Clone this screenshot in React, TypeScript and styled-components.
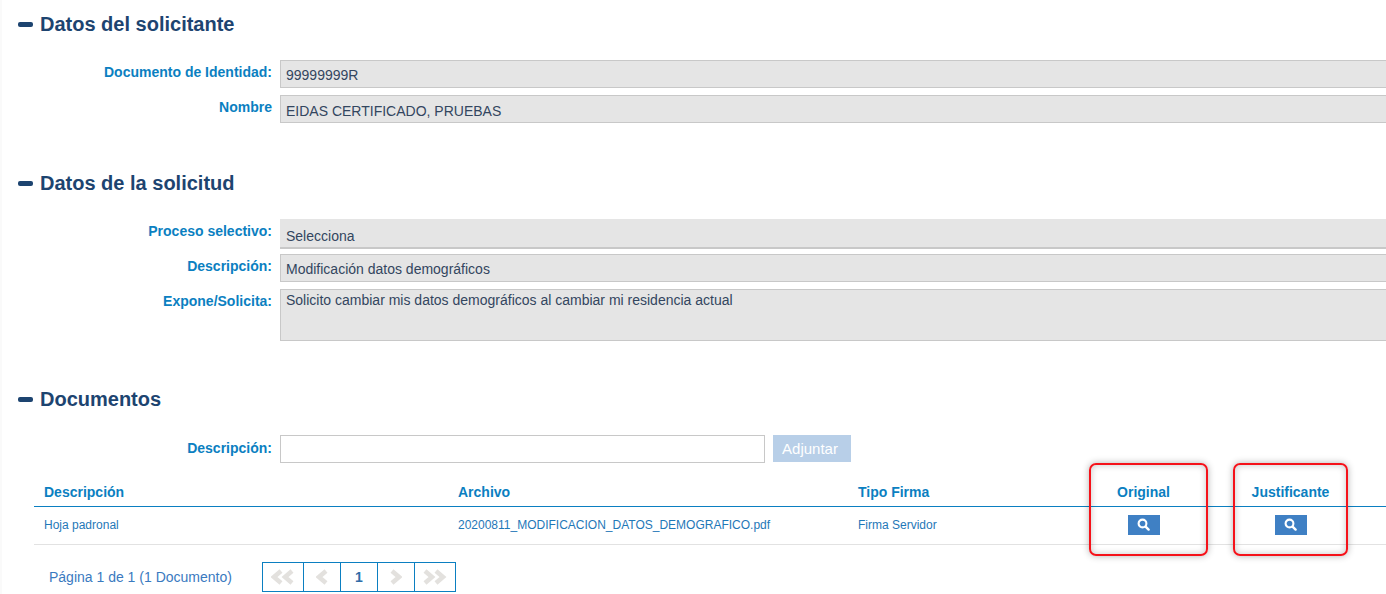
import React from "react";
import styled, { createGlobalStyle } from "styled-components";

const Global = createGlobalStyle`
  html, body { margin: 0; padding: 0; background: #fff; overflow: hidden; height: 594px; }
  body { font-family: "Liberation Sans", Arial, sans-serif; }
`;

const Page = styled.div`
  position: relative;
  width: 1400px;
  height: 594px;
  overflow: hidden;
  padding: 12px 0 0 16px;
  border-left: 2px solid #fafafa;
  box-sizing: border-box;
`;

const Section = styled.section<{ $gap: number }>`
  margin-bottom: ${(p) => p.$gap}px;
`;

const Heading = styled.h2`
  display: flex;
  align-items: center;
  gap: 7px;
  margin: 0 0 24px;
  height: 24px;
  font-size: 20px;
  line-height: 24px;
  font-weight: 700;
  color: #1d4470;
`;

const Minus = styled.span`
  width: 15px;
  height: 5px;
  border-radius: 2px;
  background: #1d4470;
`;

const Row = styled.div<{ $mb?: number }>`
  display: flex;
  gap: 8px;
  margin-bottom: ${(p) => p.$mb ?? 0}px;
`;

const Label = styled.label<{ $pt?: number }>`
  width: 254px;
  flex: none;
  text-align: right;
  font-size: 14px;
  font-weight: 700;
  line-height: 16px;
  padding-top: ${(p) => p.$pt ?? 4}px;
  color: #0b7fc1;
`;

const Field = styled.div<{ $h: number; $pt: number }>`
  flex: none;
  width: 1120px;
  height: ${(p) => p.$h}px;
  padding: ${(p) => p.$pt}px 5px 0;
  box-sizing: border-box;
  background: #e5e5e5;
  border: 1px solid #c8c8c8;
  font-size: 14px;
  line-height: 16px;
  color: #33465f;
`;

const SelectField = styled(Field)`
  border-width: 0 0 2px;
  padding-left: 6px;
`;

const TextInput = styled.div`
  width: 485px;
  height: 28px;
  box-sizing: border-box;
  background: #fff;
  border: 1px solid #c8c8c8;
`;

const Adjuntar = styled.button`
  width: 78px;
  height: 27px;
  padding: 0 4px 0 0;
  border: 0;
  background: #b8cfe8;
  color: #fff;
  font: 400 15px/27px "Liberation Sans", Arial, sans-serif;
`;

const Table = styled.div`
  margin: 9px 0 0 16px;
  width: 1352px;
`;

const Columns = styled.div`
  display: grid;
  grid-template-columns: 414px 400px 212px 147px 147px;
  padding-left: 10px;
  align-items: center;
`;

const HeadRow = styled(Columns)`
  border-bottom: 1px solid #0b7fc1;
  padding-top: 6px;
  height: 28px;
  font-size: 14px;
  font-weight: 700;
  color: #0b7fc1;
`;

const BodyRow = styled(Columns)`
  height: 35px;
  padding-bottom: 2px;
  border-bottom: 1px solid #e2e2e2;
  font-size: 12px;
  color: #1f78b8;
`;

const Center = styled.div`
  display: flex;
  justify-content: center;
`;

const ViewButton = styled.button`
  width: 32px;
  height: 20px;
  padding: 0;
  border: 0;
  display: flex;
  align-items: center;
  justify-content: center;
  background: #3f80c4;
`;

const Footer = styled.div`
  display: flex;
  align-items: center;
  margin: 17px 0 0 15px;
`;

const PageInfo = styled.div`
  width: 213px;
  font-size: 14px;
  color: #3a7abf;
`;

const Pager = styled.div`
  display: flex;
  height: 30px;
  box-sizing: border-box;
  border: 1px solid #0b7fc1;
`;

const PagerCell = styled.div<{ $w: number }>`
  width: ${(p) => p.$w}px;
  display: flex;
  align-items: center;
  justify-content: center;
  box-sizing: border-box;
  font-size: 14px;
  font-weight: 700;
  color: #2f6da8;
  & + & { border-left: 1px solid #0b7fc1; }
`;

const Callout = styled.div<{ $x: number; $w: number }>`
  position: absolute;
  left: ${(p) => p.$x}px;
  top: 463px;
  width: ${(p) => p.$w}px;
  height: 93px;
  box-sizing: border-box;
  border: 2px solid #f5121a;
  border-radius: 7px;
  box-shadow: 0 0 7px rgba(0, 0, 0, 0.3), inset 0 0 7px rgba(0, 0, 0, 0.22);
`;

const Search = () => (
  <svg width="13" height="13" viewBox="0 0 13 13" fill="none" stroke="#fff">
    <circle cx="5.5" cy="5.5" r="3.9" strokeWidth="2.1" />
    <path d="M8.6 8.6 L11.6 11.6" strokeWidth="2.4" strokeLinecap="round" />
  </svg>
);

const Chevrons = ({ dir, n }: { dir: "l" | "r"; n: number }) => (
  <svg width={n === 2 ? 24 : 12} height="16" viewBox={`0 0 ${n === 2 ? 24 : 12} 16`} fill="none" stroke="#e3e1de" strokeWidth="4.5">
    {Array.from({ length: n }).map((_, i) => {
      const o = i * 11;
      return (
        <path
          key={i}
          d={dir === "l" ? `M${o + 10} 2 L${o + 3} 8 L${o + 10} 14` : `M${o + 2} 2 L${o + 9} 8 L${o + 2} 14`}
        />
      );
    })}
  </svg>
);

export default function App() {
  return (
    <>
      <Global />
      <Page>
        <Section $gap={48}>
          <Heading><Minus />Datos del solicitante</Heading>
          <Row $mb={7}>
            <Label>Documento de Identidad:</Label>
            <Field $h={28} $pt={6}>99999999R</Field>
          </Row>
          <Row>
            <Label>Nombre</Label>
            <Field $h={28} $pt={7}>EIDAS CERTIFICADO, PRUEBAS</Field>
          </Row>
        </Section>
        <Section $gap={46}>
          <Heading><Minus />Datos de la solicitud</Heading>
          <Row $mb={5}>
            <Label>Proceso selectivo:</Label>
            <SelectField $h={30} $pt={9}>Selecciona</SelectField>
          </Row>
          <Row $mb={7}>
            <Label>Descripción:</Label>
            <Field $h={28} $pt={6}>Modificación datos demográficos</Field>
          </Row>
          <Row>
            <Label>Expone/Solicita:</Label>
            <Field $h={52} $pt={2}>Solicito cambiar mis datos demográficos al cambiar mi residencia actual</Field>
          </Row>
        </Section>
        <Section $gap={0}>
          <Heading><Minus />Documentos</Heading>
          <Row>
            <Label $pt={5}>Descripción:</Label>
            <TextInput />
            <Adjuntar>Adjuntar</Adjuntar>
          </Row>
          <Table>
            <HeadRow>
              <div>Descripción</div>
              <div>Archivo</div>
              <div>Tipo Firma</div>
              <Center>Original</Center>
              <Center>Justificante</Center>
            </HeadRow>
            <BodyRow>
              <div>Hoja padronal</div>
              <div>20200811_MODIFICACION_DATOS_DEMOGRAFICO.pdf</div>
              <div>Firma Servidor</div>
              <Center><ViewButton aria-label="Ver original"><Search /></ViewButton></Center>
              <Center><ViewButton aria-label="Ver justificante"><Search /></ViewButton></Center>
            </BodyRow>
            <Footer>
              <PageInfo>Página 1 de 1 (1 Documento)</PageInfo>
              <Pager>
                <PagerCell $w={40}><Chevrons dir="l" n={2} /></PagerCell>
                <PagerCell $w={37}><Chevrons dir="l" n={1} /></PagerCell>
                <PagerCell $w={37}>1</PagerCell>
                <PagerCell $w={37}><Chevrons dir="r" n={1} /></PagerCell>
                <PagerCell $w={41}><Chevrons dir="r" n={2} /></PagerCell>
              </Pager>
            </Footer>
          </Table>
        </Section>
        <Callout $x={1087} $w={119} />
        <Callout $x={1231} $w={115} />
      </Page>
    </>
  );
}
